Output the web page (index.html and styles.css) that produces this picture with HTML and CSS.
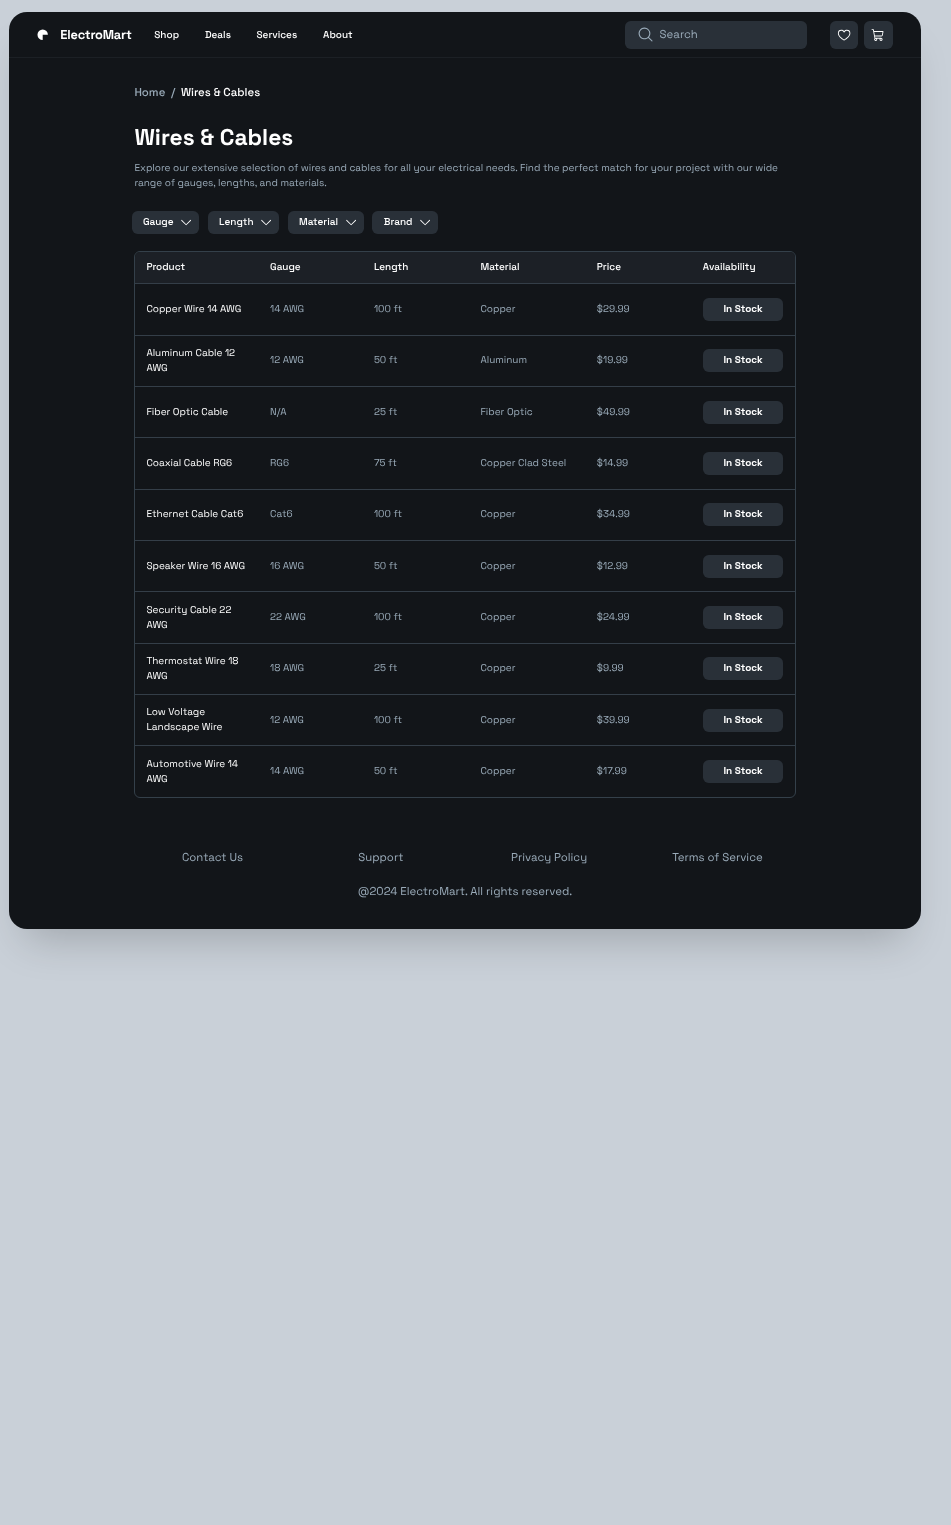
FILE: index.html
```html
<!DOCTYPE html>
<html lang="en">
<head>
<meta charset="utf-8">
<title>ElectroMart - Wires &amp; Cables</title>
<link rel="stylesheet" href="styles.css">
</head>
<body>
<svg class="sprite" aria-hidden="true">
  <symbol id="caret" viewBox="0 0 256 256"><path d="M213.66,101.66l-80,80a8,8,0,0,1-11.32,0l-80-80A8,8,0,0,1,53.66,90.34L128,164.69l74.34-74.35a8,8,0,0,1,11.32,11.32Z"/></symbol>
</svg>
<div class="window">
  <header class="header">
    <svg class="logo" viewBox="0 0 48 48"><path d="M24 46A22 22 0 1 1 46 24H24Z"/></svg>
    <span class="brand">ElectroMart</span>
    <nav class="nav">
      <a class="shop">Shop</a><a class="deals">Deals</a><a class="services">Services</a><a class="about">About</a>
    </nav>
    <div class="search">
      <svg viewBox="0 0 256 256"><path d="M229.66,218.34l-50.07-50.06a88.11,88.11,0,1,0-11.31,11.31l50.06,50.07a8,8,0,0,0,11.32-11.32ZM40,112a72,72,0,1,1,72,72A72.08,72.08,0,0,1,40,112Z"/></svg>
      <span>Search</span>
    </div>
    <div class="actions">
      <button class="icon-button" aria-label="Favorites"><svg viewBox="0 0 256 256"><path d="M178,32c-20.65,0-38.73,8.88-50,23.89C116.73,40.88,98.65,32,78,32A62.07,62.07,0,0,0,16,94c0,70,103.79,126.66,108.21,129a8,8,0,0,0,7.58,0C136.21,220.66,240,164,240,94A62.07,62.07,0,0,0,178,32ZM128,206.8C109.74,196.16,32,147.69,32,94A46.06,46.06,0,0,1,78,48c19.45,0,35.78,10.36,42.6,27a8,8,0,0,0,14.8,0c6.82-16.67,23.15-27,42.6-27a46.06,46.06,0,0,1,46,46C224,147.61,146.24,196.15,128,206.8Z"/></svg></button>
      <button class="icon-button" aria-label="Cart"><svg viewBox="0 0 256 256"><path d="M222.14,58.87A8,8,0,0,0,216,56H54.68L49.79,29.14A16,16,0,0,0,34.05,16H16a8,8,0,0,0,0,16h18L59.56,172.29a24,24,0,0,0,5.33,11.27,28,28,0,1,0,44.4,8.44h45.42A27.75,27.75,0,0,0,152,204a28,28,0,1,0,28-28H83.17a8,8,0,0,1-7.87-6.57L72.13,152h116a24,24,0,0,0,23.61-19.71l12.16-66.86A8,8,0,0,0,222.14,58.87ZM96,204a12,12,0,1,1-12-12A12,12,0,0,1,96,204Zm96,0a12,12,0,1,1-12-12A12,12,0,0,1,192,204Zm4-74.57A8,8,0,0,1,188.1,136H69.22L57.59,72H206.41Z"/></svg></button>
    </div>
  </header>
  <main class="content">
    <div class="crumbs"><a class="home">Home</a><span class="slash">/</span><span class="here">Wires &amp; Cables</span></div>
    <h1 class="title">Wires &amp; Cables</h1>
    <p class="intro">Explore our extensive selection of wires and cables for all your electrical needs. Find the perfect match for your project with our wide<br>range of gauges, lengths, and materials.</p>
    <div class="filters">
      <button class="chip chip-gauge">Gauge<svg><use href="#caret"/></svg></button>
      <button class="chip chip-length">Length<svg><use href="#caret"/></svg></button>
      <button class="chip chip-material">Material<svg><use href="#caret"/></svg></button>
      <button class="chip chip-brand">Brand<svg><use href="#caret"/></svg></button>
    </div>
    <div class="table">
      <div class="row head"><span>Product</span><span>Gauge</span><span>Length</span><span>Material</span><span>Price</span><span>Availability</span></div>
      <div class="row"><span class="name">Copper Wire 14 AWG</span><span>14 AWG</span><span>100 ft</span><span>Copper</span><span>$29.99</span><button class="stock">In Stock</button></div>
      <div class="row"><span class="name">Aluminum Cable 12<br>AWG</span><span>12 AWG</span><span>50 ft</span><span>Aluminum</span><span>$19.99</span><button class="stock">In Stock</button></div>
      <div class="row"><span class="name">Fiber Optic Cable</span><span>N/A</span><span>25 ft</span><span>Fiber Optic</span><span>$49.99</span><button class="stock">In Stock</button></div>
      <div class="row"><span class="name">Coaxial Cable RG6</span><span>RG6</span><span>75 ft</span><span>Copper Clad Steel</span><span>$14.99</span><button class="stock">In Stock</button></div>
      <div class="row"><span class="name">Ethernet Cable Cat6</span><span>Cat6</span><span>100 ft</span><span>Copper</span><span>$34.99</span><button class="stock">In Stock</button></div>
      <div class="row"><span class="name">Speaker Wire 16 AWG</span><span>16 AWG</span><span>50 ft</span><span>Copper</span><span>$12.99</span><button class="stock">In Stock</button></div>
      <div class="row"><span class="name">Security Cable 22<br>AWG</span><span>22 AWG</span><span>100 ft</span><span>Copper</span><span>$24.99</span><button class="stock">In Stock</button></div>
      <div class="row"><span class="name">Thermostat Wire 18<br>AWG</span><span>18 AWG</span><span>25 ft</span><span>Copper</span><span>$9.99</span><button class="stock">In Stock</button></div>
      <div class="row"><span class="name">Low Voltage<br>Landscape Wire</span><span>12 AWG</span><span>100 ft</span><span>Copper</span><span>$39.99</span><button class="stock">In Stock</button></div>
      <div class="row"><span class="name">Automotive Wire 14<br>AWG</span><span>14 AWG</span><span>50 ft</span><span>Copper</span><span>$17.99</span><button class="stock">In Stock</button></div>
    </div>
  </main>
  <footer class="footer">
    <div class="links"><a>Contact Us</a><a>Support</a><a>Privacy Policy</a><a>Terms of Service</a></div>
    <p class="copyright">@2024 ElectroMart. All rights reserved.</p>
  </footer>
</div>
</body>
</html>
```
FILE: styles.css
```css
* { box-sizing: border-box; }
body {
  margin: 0;
  padding: 12px 30px 0 9px;
  min-height: 1525px;
  background: #c9d0d8;
  color: #fff;
  font: 9.975px/15px "Space Grotesk", Inter, sans-serif;
  text-rendering: geometricPrecision;
}
svg { fill: currentColor; display: block; flex: none; }
.sprite { display: none; }
button { font: inherit; color: inherit; border: 0; padding: 0; }
a, span { white-space: nowrap; }

.window {
  width: 912px;
  height: 917px;
  border-radius: 18px;
  background: #121519;
  box-shadow: 0 25px 43px -16px rgba(0, 0, 0, .21);
  will-change: transform;
}

.header {
  display: flex;
  align-items: center;
  height: 46.4px;
  padding: 0 28.5px;
  border-bottom: 1px solid #1c2025;
}
.logo { width: 11.4px; height: 11.4px; margin-left: -.4px; }
.brand { margin-left: 11.8px; width: 72px; font-size: 12.83px; font-weight: 700; letter-spacing: -.19px; }
.nav { display: flex; gap: 25.6px; margin: -1px 0 0 22px; font-weight: 500; }
.shop { width: 25px; }
.deals { width: 26px; }
.services { width: 41px; }
.about { width: 30px; }
.search {
  display: flex;
  align-items: center;
  gap: 5.5px;
  width: 182px;
  height: 28.5px;
  margin: .6px 0 0 auto;
  padding: 0 0 0 12px;
  border-radius: 5.7px;
  background: #293038;
  color: #9aabb9;
  font-size: 11.4px;
}
.search svg { width: 17.1px; height: 17.1px; }
.search span { padding-top: 1.6px; }
.actions { display: flex; gap: 5.7px; margin: .6px 0 0 22.8px; }
.icon-button {
  display: grid;
  place-items: center;
  width: 28.5px;
  height: 28.5px;
  border-radius: 5.7px;
  background: #293038;
}
.icon-button svg { width: 14.25px; height: 14.25px; }

.content { padding: 26.8px 125px 0 125.4px; }
.crumbs { display: flex; height: 17px; line-height: 17px; font-size: 11.4px; font-weight: 500; }
.home, .slash { color: #9aabb9; }
.home { width: 36.5px; }
.slash { width: 10px; }
.title { margin: 21.2px 0 0; font-size: 22.8px; line-height: 30px; font-weight: 700; }
.intro { margin: 6.6px 0 0; color: #9aabb9; white-space: nowrap; }

.filters { display: flex; gap: 8.6px; margin: 21px 0 0 -2.8px; }
.chip {
  display: flex;
  align-items: center;
  justify-content: space-between;
  height: 22.8px;
  padding: 0 5.7px 1px 11.4px;
  border-radius: 5.7px;
  background: #293038;
  font-weight: 500;
}
.chip svg { width: 14.25px; height: 14.25px; margin-top: 1px; }
.chip-gauge { width: 67.5px; }
.chip-length { width: 71.3px; }
.chip-material { width: 76.3px; }
.chip-brand { width: 65.5px; }

.table {
  width: 661.6px;
  margin-top: 17px;
  border: 1px solid #34404a;
  border-radius: 6px;
  overflow: hidden;
}
.row {
  display: grid;
  grid-template-columns: 123.7px 103.8px 106.6px 116.4px 105.9px 80.7px;
  align-items: center;
  height: 51.35px;
  padding-left: 11px;
  border-top: 1px solid #343e48;
  color: #9aabb9;
}
.row span { padding-bottom: 1.8px; }
.head { height: 31.5px; border-top: 0; background: #1c2026; color: #fff; font-weight: 500; }
.name { color: #fff; }
.stock {
  height: 22.8px;
  padding-bottom: 1.8px;
  border-radius: 5.7px;
  background: #293038;
  color: #fff;
  font-weight: 600;
}

.footer { padding: 52.4px 119.4px 0; color: #9aabb9; font-size: 11.4px; line-height: 17px; text-align: center; }
.links { display: flex; justify-content: space-between; }
.links a { width: 168.3px; }
.copyright { margin: 17.2px 0 0; }
```
